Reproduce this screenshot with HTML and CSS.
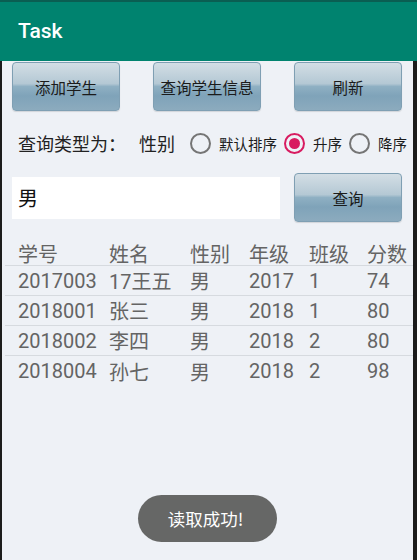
FILE: index.html
```html
<!DOCTYPE html>
<html lang="zh-CN">
<head>
<meta charset="utf-8">
<title>Task</title>
<link rel="stylesheet" href="styles.css">
</head>
<body>
<div class="screen">
  <header class="appbar"><span class="title">Task</span></header>
  <main class="content">
    <div class="btn-row">
      <button class="btn">添加学生</button>
      <button class="btn">查询学生信息</button>
      <button class="btn">刷新</button>
    </div>
    <div class="type-row">
      <span class="type-label">查询类型为：</span>
      <span class="type-value">性别</span>
      <label class="radio"><span class="dot"></span><span class="radio-text">默认排序</span></label>
      <label class="radio checked"><span class="dot"></span><span class="radio-text">升序</span></label>
      <label class="radio"><span class="dot"></span><span class="radio-text">降序</span></label>
    </div>
    <div class="search-row">
      <div class="input">男</div>
      <button class="btn btn-search">查询</button>
    </div>
    <div class="table">
      <div class="row head"><span>学号</span><span>姓名</span><span>性别</span><span>年级</span><span>班级</span><span>分数</span></div>
      <div class="row"><span>2017003</span><span>17王五</span><span>男</span><span>2017</span><span>1</span><span>74</span></div>
      <div class="row"><span>2018001</span><span>张三</span><span>男</span><span>2018</span><span>1</span><span>80</span></div>
      <div class="row"><span>2018002</span><span>李四</span><span>男</span><span>2018</span><span>2</span><span>80</span></div>
      <div class="row last"><span>2018004</span><span>孙七</span><span>男</span><span>2018</span><span>2</span><span>98</span></div>
    </div>
  </main>
  <div class="toast">读取成功!</div>
</div>
</body>
</html>
```
FILE: styles.css
```css
* { box-sizing: border-box; }
html, body {
  margin: 0;
  padding: 0;
  width: 417px;
  height: 560px;
  overflow: hidden;
  background: #eef1f6;
}
body {
  font-family: Roboto, "Noto Sans CJK SC", sans-serif;
}
.screen {
  position: relative;
  width: 417px;
  height: 560px;
  display: flex;
  flex-direction: column;
}
.appbar {
  height: 61px;
  flex: none;
  background: #00836f;
  border-top: 2px solid #0a5e52;
  display: flex;
  align-items: center;
  padding-left: 18px;
  padding-bottom: 2px;
}
.title {
  color: #ffffff;
  font-family: Roboto, sans-serif;
  font-weight: 500;
  font-size: 21px;
}
.content {
  flex: 1;
  border-left: 2px solid #1c1c1c;
  border-right: 4px solid #1c1c1c;
  display: flex;
  flex-direction: column;
  min-width: 0;
}
.btn {
  width: 108px;
  height: 49px;
  flex: none;
  border: 1px solid #7f9fb3;
  border-radius: 4px;
  background: linear-gradient(to bottom, #d3dee5 0%, #b4c8d4 44%, #8fb0c3 50%, #7fa3b9 70%, #8cabbe 100%);
  color: #1b1b1b;
  font-family: "Noto Sans CJK SC", sans-serif;
  font-size: 15.5px;
  padding: 0;
  white-space: nowrap;
  box-shadow: 0 1px 1px rgba(0,0,0,0.12);
}
.btn-row {
  display: flex;
  gap: 33px;
  padding-left: 10px;
  margin-top: 1px;
}
.type-row {
  display: flex;
  align-items: center;
  height: 32px;
  margin-top: 16px;
  padding-left: 16px;
  font-family: "Noto Sans CJK SC", sans-serif;
  color: #222;
  white-space: nowrap;
}
.type-row > * { flex: none; }
.type-label { font-size: 18px; }
.type-value { font-size: 18px; margin-left: 13px; margin-right: 15px; }
.radio {
  display: flex;
  align-items: center;
  margin-right: 7px;
}
.dot {
  flex: none;
  width: 21px;
  height: 21px;
  border-radius: 50%;
  border: 2px solid #757575;
  display: flex;
  align-items: center;
  justify-content: center;
}
.radio.checked .dot { border-color: #d81b60; }
.radio.checked .dot::after {
  content: "";
  width: 11px;
  height: 11px;
  border-radius: 50%;
  background: #d81b60;
}
.radio-text {
  font-size: 14.5px;
  margin-left: 8px;
  color: #1b1b1b;
}
.search-row {
  display: flex;
  align-items: center;
  margin-top: 14px;
  padding-left: 10px;
}
.input {
  width: 268px;
  height: 42px;
  flex: none;
  background: #ffffff;
  display: flex;
  align-items: center;
  padding-left: 6px;
  font-family: "Noto Sans CJK SC", sans-serif;
  font-size: 20px;
  color: #111;
  margin-right: 14px;
}
.btn-search { height: 49px; }
.table {
  margin-top: 17px;
  margin-left: 3px;
  font-family: Roboto, "Noto Sans CJK SC", sans-serif;
  font-size: 20px;
  color: #646464;
}
.row {
  display: grid;
  grid-template-columns: 91px 81px 59px 60px 58px 1fr;
  padding-left: 13px;
  height: 30px;
  align-items: center;
  border-bottom: 1px solid #d6dadf;
}
.row.head { height: 27px; }
.row.last { border-bottom: none; }
.row span { white-space: nowrap; }
.toast {
  position: absolute;
  left: 138px;
  top: 495px;
  width: 139px;
  height: 47px;
  border-radius: 24px;
  background: #666766;
  color: #ffffff;
  font-family: "Noto Sans CJK SC", sans-serif;
  font-size: 17.5px;
  display: flex;
  align-items: center;
  justify-content: center;
  padding-right: 4px;
  white-space: nowrap;
}
```
